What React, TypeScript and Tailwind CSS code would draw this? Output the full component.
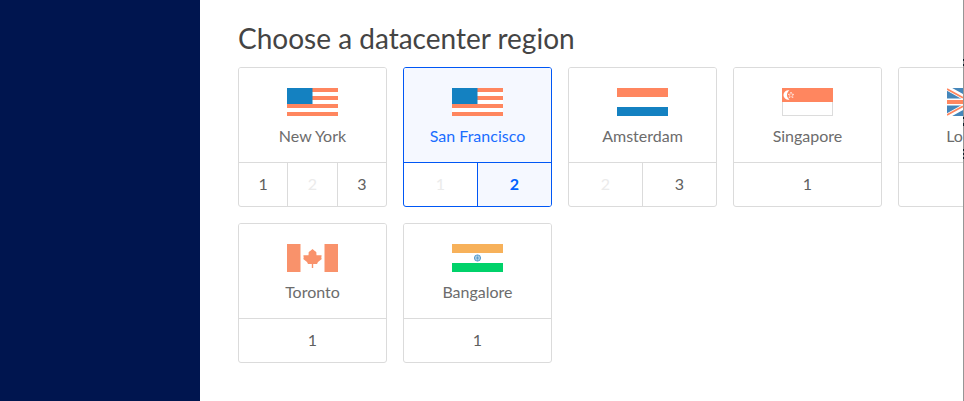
import { useState } from "react";
import type { ReactNode } from "react";

type Slot = { id: string; disabled?: boolean };
type Region = { name: string; flag: ReactNode; slots: Slot[] };

function Flag({ children }: { children: ReactNode }) {
  return (
    <svg className="block h-7 w-[51px] shrink-0" viewBox="0 0 51 28" aria-hidden="true">
      {children}
    </svg>
  );
}

function UsaFlag() {
  return (
    <Flag>
      <rect width="51" height="28" fill="#fff" />
      <path d="M0 0h51v4H0zM0 8h51v4H0zM0 16h51v4H0zM0 24h51v4H0z" fill="#ff865f" />
      <rect width="25.500" height="16" fill="#1481c1" />
    </Flag>
  );
}

function NetherlandsFlag() {
  return (
    <Flag>
      <rect width="51" height="9" fill="#ff865f" />
      <rect y="19" width="51" height="9" fill="#1481c1" />
    </Flag>
  );
}

function SingaporeFlag() {
  return (
    <Flag>
      <rect x="0.5" y="0.5" width="50" height="27" fill="#fff" stroke="#dcdcdc" />
      <rect width="51" height="14" fill="#ff865f" />
      <path d="M7.500 2.500A4.700 4.700 0 1 0 7.500 11.500A5.200 5.200 0 0 1 7.500 2.500z" fill="#fff" />
      <path
        d="M9 4.200L9.800 6.200 12 6.300 10.400 7.600 11 9.600 9 8.500 7.200 9.600 7.700 7.600 6.200 6.300 8.300 6.200z"
        fill="none"
        stroke="#fff"
        strokeWidth="0.8"
        strokeDasharray="1.4 0.6"
      />
    </Flag>
  );
}

function UkFlag() {
  return (
    <Flag>
      <rect width="51" height="28" fill="#4586ba" />
      <path d="M0 0l51 28M51 0L0 28" stroke="#fff" strokeWidth="5" />
      <path d="M0 1l51 28M51 -1L0 27" stroke="#ff865f" strokeWidth="1.800" />
      <path d="M0 14h51M25.500 0v28" stroke="#fff" strokeWidth="7" />
      <path d="M0 14h51M25.500 0v28" stroke="#ff865f" strokeWidth="4" />
    </Flag>
  );
}

function CanadaFlag() {
  return (
    <Flag>
      <path d="M0 0h13.500v28H0zM37.500 0H51v28H37.500z" fill="#f9926b" />
      <path
        d="M25.500 5L27.500 6.800 29.300 8 29.500 11.300 34.600 11.200 34.300 14 34.800 15 31 18 30 20 26.200 20 26.200 24H24.800V20L21 20 20 18 16.200 15 16.700 14 16.400 11.200 21.500 11.300 21.700 8 23.500 6.800z"
        fill="#f9926b"
      />
    </Flag>
  );
}

function IndiaFlag() {
  return (
    <Flag>
      <rect width="51" height="9" fill="#f7b15a" />
      <rect y="19" width="51" height="9" fill="#00d26a" />
      <circle cx="25.500" cy="14" r="3.100" fill="#d7e8f3" stroke="#4a93c8" strokeWidth="0.9" />
      <path
        d="M25.500 11v6M22.500 14h6M23.400 11.900l4.200 4.200M27.600 11.900l-4.200 4.200"
        stroke="#4a93c8"
        strokeWidth="0.6"
      />
    </Flag>
  );
}

const regions: Region[] = [
  { name: "New York", flag: <UsaFlag />, slots: [{ id: "1" }, { id: "2", disabled: true }, { id: "3" }] },
  { name: "San Francisco", flag: <UsaFlag />, slots: [{ id: "1", disabled: true }, { id: "2" }] },
  { name: "Amsterdam", flag: <NetherlandsFlag />, slots: [{ id: "2", disabled: true }, { id: "3" }] },
  { name: "Singapore", flag: <SingaporeFlag />, slots: [{ id: "1" }] },
  { name: "London", flag: <UkFlag />, slots: [{ id: "1" }] },
  { name: "Toronto", flag: <CanadaFlag />, slots: [{ id: "1" }] },
  { name: "Bangalore", flag: <IndiaFlag />, slots: [{ id: "1" }] },
];

type CardProps = {
  region: Region;
  selectedSlot: string | null;
  onSelect: (slot: string) => void;
};

function RegionCard({ region, selectedSlot, onSelect }: CardProps) {
  const active = selectedSlot !== null;
  const line = active ? "border-[#0057f5]" : "border-[#dbdbdb]";
  const firstFree = region.slots.find((slot) => !slot.disabled);

  return (
    <div className={`flex flex-col overflow-hidden rounded-[3px] border ${line}`}>
      <button
        type="button"
        onClick={() => firstFree && onSelect(firstFree.id)}
        className={`flex h-[94px] flex-col items-center gap-2 pt-5 text-base leading-6 ${
          active ? "bg-[#f5f8ff] text-[#1a6dff]" : "bg-white text-[#6c6c6c]"
        }`}
      >
        {region.flag}
        <span>{region.name}</span>
      </button>
      <div className={`flex h-11 border-t ${line}`}>
        {region.slots.map((slot, index) => {
          const chosen = slot.id === selectedSlot;
          const tone = slot.disabled
            ? "text-[#ebebeb]"
            : chosen
              ? "bg-[#f5f8ff] font-bold text-[#0061ff]"
              : "text-[#5f5f5f]";
          return (
            <button
              key={slot.id}
              type="button"
              disabled={slot.disabled}
              aria-label={`${region.name} ${slot.id}`}
              aria-pressed={chosen}
              onClick={() => onSelect(slot.id)}
              className={`flex-1 pb-0.5 text-base leading-6 ${index > 0 ? `border-l ${line}` : ""} ${tone}`}
            >
              {slot.id}
            </button>
          );
        })}
      </div>
    </div>
  );
}

export default function App() {
  const [selection, setSelection] = useState({ region: "San Francisco", slot: "2" });

  return (
    <div className="flex min-h-screen overflow-hidden bg-white font-['Lato','Open_Sans',sans-serif]">
      <aside className="w-[200px] shrink-0 bg-[#00154f]" />
      <main className="min-w-0 flex-1 overflow-hidden pt-5 pl-[38px]">
        <h1 className="text-[28px] leading-9 text-[#444]">Choose a datacenter region</h1>
        <div className="mt-[11px] grid grid-cols-[repeat(5,149px)] gap-4">
          {regions.map((region) => (
            <RegionCard
              key={region.name}
              region={region}
              selectedSlot={selection.region === region.name ? selection.slot : null}
              onSelect={(slot) => setSelection({ region: region.name, slot })}
            />
          ))}
        </div>
      </main>
      <div className="w-px shrink-0 bg-[#969696]">
        <svg className="block h-40 w-px" viewBox="0 0 1 160" aria-hidden="true">
          <path
            d="M0 59h1v2H0zM0 64h1v2H0zM0 117h1v2H0zM0 123h1v3H0zM0 149h1v2H0zM0 153h1v2H0zM0 157h1v2H0z"
            fill="#14202b"
          />
        </svg>
      </div>
    </div>
  );
}
